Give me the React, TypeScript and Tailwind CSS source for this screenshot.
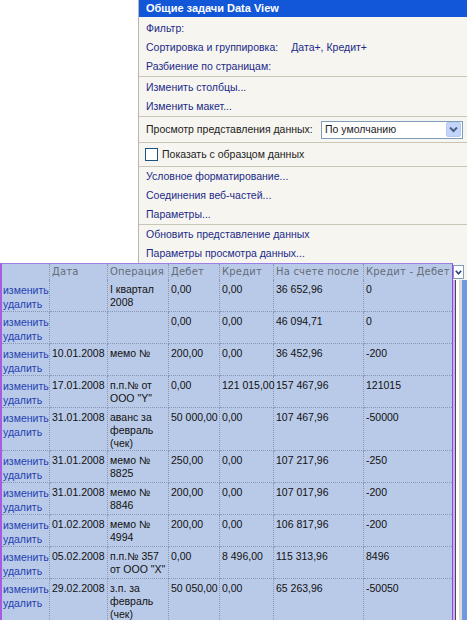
type Row = {
  date: string;
  op: string[];
  debit: string;
  credit: string;
  balance: string;
  diff: string;
};

const rows: Row[] = [
  { date: "", op: ["I квартал", "2008"], debit: "0,00", credit: "0,00", balance: "36 652,96", diff: "0" },
  { date: "", op: [], debit: "0,00", credit: "0,00", balance: "46 094,71", diff: "0" },
  { date: "10.01.2008", op: ["мемо №"], debit: "200,00", credit: "0,00", balance: "36 452,96", diff: "-200" },
  { date: "17.01.2008", op: ["п.п.№ от", "ООО \"Y\""], debit: "0,00", credit: "121 015,00", balance: "157 467,96", diff: "121015" },
  { date: "31.01.2008", op: ["аванс за", "февраль", "(чек)"], debit: "50 000,00", credit: "0,00", balance: "107 467,96", diff: "-50000" },
  { date: "31.01.2008", op: ["мемо №", "8825"], debit: "250,00", credit: "0,00", balance: "107 217,96", diff: "-250" },
  { date: "31.01.2008", op: ["мемо №", "8846"], debit: "200,00", credit: "0,00", balance: "107 017,96", diff: "-200" },
  { date: "01.02.2008", op: ["мемо №", "4994"], debit: "200,00", credit: "0,00", balance: "106 817,96", diff: "-200" },
  { date: "05.02.2008", op: ["п.п.№ 357", "от ООО \"X\""], debit: "0,00", credit: "8 496,00", balance: "115 313,96", diff: "8496" },
  { date: "29.02.2008", op: ["з.п. за", "февраль", "(чек)"], debit: "50 050,00", credit: "0,00", balance: "65 263,96", diff: "-50050" },
];

const headers = ["", "Дата", "Операция", "Дебет", "Кредит", "На счете после", "Кредит - Дебет"];

function PanelItem({ children }: { children: React.ReactNode }) {
  return <div className="flex h-[19px] items-center whitespace-nowrap text-[#1b2a8a]">{children}</div>;
}

function Sep() {
  return <div className="h-px bg-[#c9c6b8]" />;
}

function TaskPanel() {
  return (
    <div className="ml-[138px] flex h-[263px] w-[329px] flex-col border-l border-[#b9b7ad] bg-[#f6f5ef] text-[10.5px]">
      <div className="flex h-[17px] items-center bg-[#1257d8] px-[7px] text-[11px] font-bold text-white">
        Общие задачи Data View
      </div>
      <div className="px-[7px] pt-[2px]">
        <PanelItem>Фильтр:</PanelItem>
        <PanelItem>
          Сортировка и группировка:<span className="ml-[13px]">Дата+, Кредит+</span>
        </PanelItem>
        <PanelItem>Разбиение по страницам:</PanelItem>
      </div>
      <Sep />
      <div className="px-[7px] pt-px">
        <PanelItem>Изменить столбцы...</PanelItem>
        <PanelItem>Изменить макет...</PanelItem>
      </div>
      <Sep />
      <div className="flex h-[25px] items-center justify-between pl-[7px] pr-[4px] text-[#222]">
        <span>Просмотр представления данных:</span>
        <div className="flex h-[18px] w-[142px] items-center justify-between border border-[#7f9db9] bg-white pl-[3px] pr-px">
          <span>По умолчанию</span>
          <div className="flex h-[15px] w-[15px] items-center justify-center rounded-[2px] border border-[#b9cbf5] bg-[#c4d5fb]">
            <svg width="9" height="7" viewBox="0 0 9 7">
              <polyline points="1,1.5 4.5,5 8,1.5" fill="none" stroke="#4d6185" strokeWidth="2" />
            </svg>
          </div>
        </div>
      </div>
      <Sep />
      <div className="flex h-[23px] items-center pl-[6px] text-[#222]">
        <div className="mr-[4px] h-[13px] w-[13px] border border-[#1c5180] bg-white" />
        Показать с образцом данных
      </div>
      <Sep />
      <div className="px-[7px]">
        <PanelItem>Условное форматирование...</PanelItem>
        <PanelItem>Соединения веб-частей...</PanelItem>
        <PanelItem>Параметры...</PanelItem>
      </div>
      <Sep />
      <div className="px-[7px]">
        <PanelItem>Обновить представление данных</PanelItem>
        <PanelItem>Параметры просмотра данных...</PanelItem>
      </div>
    </div>
  );
}

function DataTable() {
  const cell = "border-r border-b border-dotted border-[#8797b4] pl-[2px] pt-[3px] leading-[13px] whitespace-nowrap";
  return (
    <div className="relative flex">
      <div className="w-[453px] border-l-2 border-t border-r border-l-[#a85ce0] border-t-[#9b7fe6] border-r-[#a040e8] bg-[#b9cae8]">
        <div className="grid grid-cols-[48px_58px_61px_51px_54px_90px_88px] text-[10.5px] text-[#111]">
          {headers.map((h, i) => (
            <div
              key={i}
              className={`h-[16px] whitespace-nowrap pl-[2px] text-[10px] leading-[16px] tracking-[0.2px] text-[#666c78] ${i < 6 ? "border-r border-dotted border-[#8797b4]" : ""}`}
              style={{ fontFamily: '"DejaVu Sans", Verdana, sans-serif' }}
            >
              {h}
            </div>
          ))}
          {rows.map((r, i) => (
            <div key={i} className="contents">
              <div className="border-r border-b border-dotted border-[#8797b4] pl-px pt-[3px] text-[10.5px] leading-[14px] text-[#1f3fb0]">
                <div>изменить</div>
                <div>удалить</div>
              </div>
              <div className={cell}>{r.date}</div>
              <div className={cell}>
                {r.op.map((l, j) => (
                  <div key={j}>{l}</div>
                ))}
              </div>
              <div className={cell}>{r.debit}</div>
              <div className={cell}>{r.credit}</div>
              <div className={cell}>{r.balance}</div>
              <div className="border-b border-dotted border-[#8797b4] pl-[2px] pt-[3px] leading-[13px]">{r.diff}</div>
            </div>
          ))}
        </div>
      </div>
      <div className="flex w-[14px] bg-[#f6f5ef]">
        <div className="mt-[17px] flex w-full">
          <div className="w-[2px] bg-[#c4b4ec]" />
          <div className="w-px bg-[#4a4a4a]" />
          <div className="w-[3px] bg-white" />
          <div className="w-[3px] bg-[#dcdad2]" />
          <div className="flex-1 bg-[#6f9ae2]" />
        </div>
      </div>
      <div className="absolute left-[453px] top-[2px] flex h-[14px] w-[11px] items-center justify-center border border-[#7f9db9] bg-white">
        <svg width="7" height="5" viewBox="0 0 7 5">
          <polyline points="0.8,0.8 3.5,3.8 6.2,0.8" fill="none" stroke="#2b3f7a" strokeWidth="1.6" />
        </svg>
      </div>
    </div>
  );
}

export default function App() {
  return (
    <div
      className="h-[620px] w-[467px] overflow-hidden bg-white"
      style={{ fontFamily: '"Liberation Sans", Arial, sans-serif' }}
    >
      <TaskPanel />
      <DataTable />
    </div>
  );
}
